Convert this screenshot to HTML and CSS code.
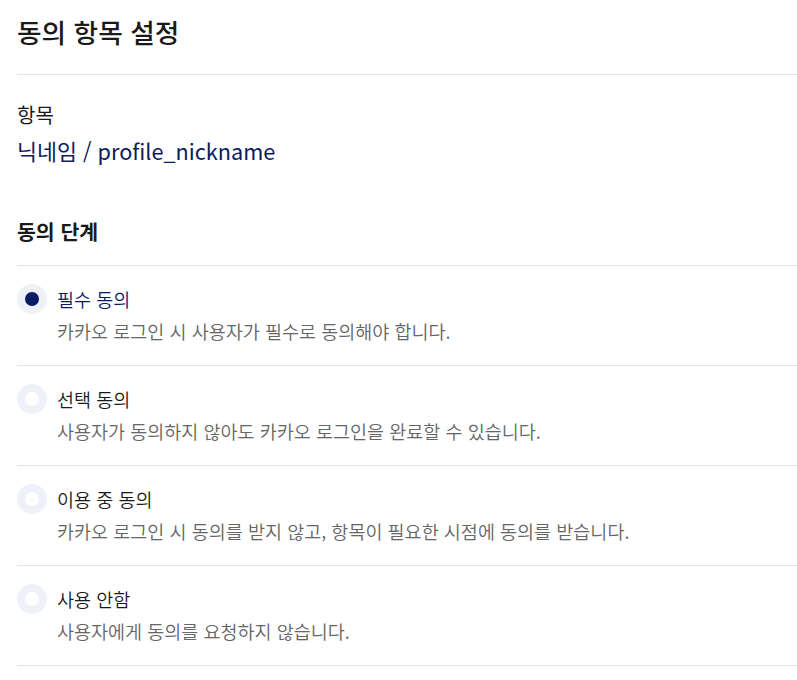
FILE: index.html
```html
<!DOCTYPE html>
<html lang="ko">
<head>
<meta charset="utf-8">
<title>동의 항목 설정</title>
<link rel="stylesheet" href="styles.css">
</head>
<body>
<div class="page">
  <h1 class="title">동의 항목 설정</h1>
  <div class="item">
    <div class="item-label">항목</div>
    <div class="item-value">닉네임 / profile_nickname</div>
  </div>
  <h2 class="section">동의 단계</h2>
  <ul class="options">
    <li class="option selected">
      <span class="radio"><span class="dot"></span></span>
      <div class="option-text">
        <div class="option-label">필수 동의</div>
        <div class="option-desc">카카오 로그인 시 사용자가 필수로 동의해야 합니다.</div>
      </div>
    </li>
    <li class="option">
      <span class="radio"><span class="dot"></span></span>
      <div class="option-text">
        <div class="option-label">선택 동의</div>
        <div class="option-desc">사용자가 동의하지 않아도 카카오 로그인을 완료할 수 있습니다.</div>
      </div>
    </li>
    <li class="option">
      <span class="radio"><span class="dot"></span></span>
      <div class="option-text">
        <div class="option-label">이용 중 동의</div>
        <div class="option-desc">카카오 로그인 시 동의를 받지 않고, 항목이 필요한 시점에 동의를 받습니다.</div>
      </div>
    </li>
    <li class="option">
      <span class="radio"><span class="dot"></span></span>
      <div class="option-text">
        <div class="option-label">사용 안함</div>
        <div class="option-desc">사용자에게 동의를 요청하지 않습니다.</div>
      </div>
    </li>
  </ul>
</div>
</body>
</html>
```
FILE: styles.css
```css
html, body {
  margin: 0;
  padding: 0;
  background: #fff;
}
body {
  font-family: "Noto Sans CJK KR", "Noto Sans", sans-serif;
  color: #1a1a1a;
}
.page {
  padding-left: 17px;
}
.title {
  margin: 0;
  height: 75px;
  box-sizing: border-box;
  padding-top: 12px;
  font-size: 26.7px;
  font-weight: 500;
  line-height: 40px;
  border-bottom: 1px solid #e5e5e5;
}
.item {
  padding-top: 25px;
}
.item-label {
  font-size: 20px;
  line-height: 30px;
  color: #1a1a1a;
}
.item-value {
  font-size: 21.7px;
  line-height: 32px;
  color: #0b1b5e;
  margin-top: 5px;
}
.section {
  margin: 0;
  padding-top: 49px;
  padding-bottom: 19px;
  font-size: 20.5px;
  font-weight: 700;
  line-height: 30px;
  border-bottom: 1px solid #e5e5e5;
}
.options {
  list-style: none;
  margin: 0;
  padding: 0;
}
.option {
  display: flex;
  gap: 10px;
  height: 100px;
  box-sizing: border-box;
  padding-top: 18px;
  border-bottom: 1px solid #e5e5e5;
}
.radio {
  flex: none;
  width: 30px;
  height: 30px;
  border-radius: 50%;
  background: #eff1f8;
  display: flex;
  align-items: center;
  justify-content: center;
}
.dot {
  width: 14px;
  height: 14px;
  border-radius: 50%;
  background: #fff;
}
.selected .dot {
  background: #0b1b66;
}
.option-label {
  font-size: 18.5px;
  font-weight: 350;
  line-height: 30px;
  color: #1a1a1a;
}
.selected .option-label {
  color: #0b1b5e;
}
.option-desc {
  font-size: 18.5px;
  font-weight: 350;
  line-height: 30px;
  color: #666;
  margin-top: 2px;
}
```
